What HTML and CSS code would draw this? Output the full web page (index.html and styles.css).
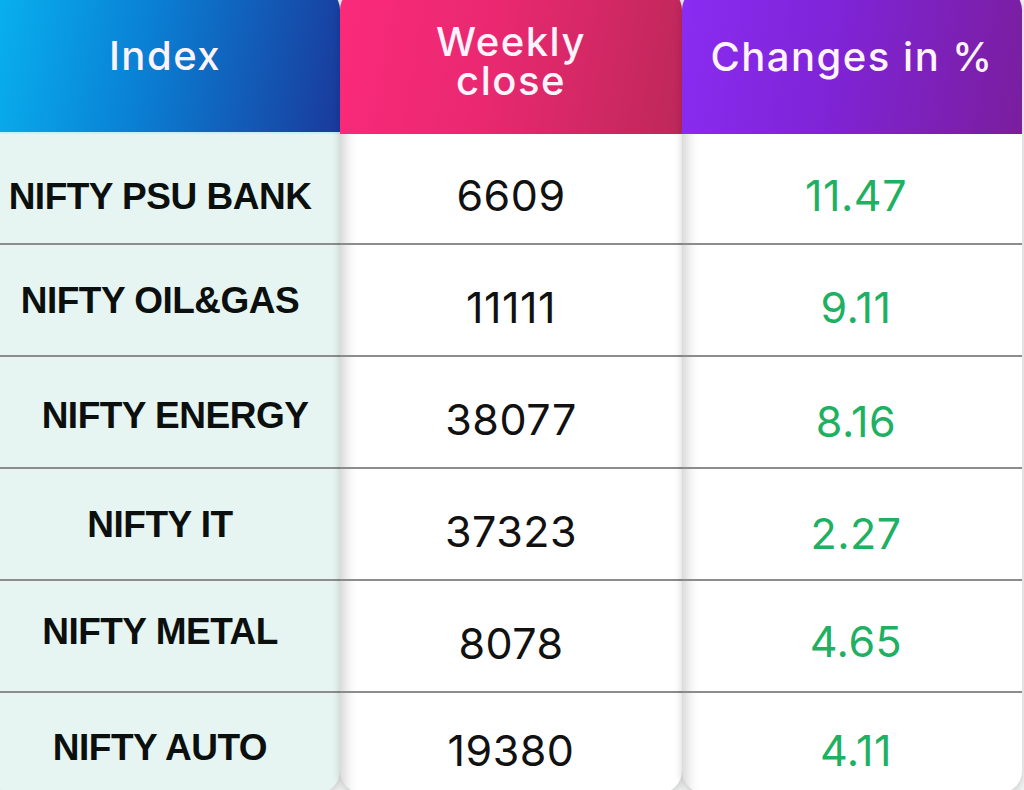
FILE: index.html
```html
<!DOCTYPE html>
<html lang="en">
<head>
<meta charset="utf-8">
<title>Weekly sector indices</title>
<link rel="stylesheet" href="styles.css">
</head>
<body>
<main class="table">
  <section class="col col-index">
    <header class="head">Index</header>
    <div class="cell r1">NIFTY PSU BANK</div>
    <div class="cell r2">NIFTY OIL&amp;GAS</div>
    <div class="cell r3 nudge">NIFTY ENERGY</div>
    <div class="cell r4">NIFTY IT</div>
    <div class="cell r5">NIFTY METAL</div>
    <div class="cell r6 last">NIFTY AUTO</div>
  </section>
  <section class="col col-close">
    <header class="head two-line"><span class="line">Weekly</span><span class="line">close</span></header>
    <div class="cell r1">6609</div>
    <div class="cell r2">11111</div>
    <div class="cell r3">38077</div>
    <div class="cell r4">37323</div>
    <div class="cell r5">8078</div>
    <div class="cell r6 last">19380</div>
  </section>
  <section class="col col-change">
    <header class="head">Changes in %</header>
    <div class="cell r1">11.47</div>
    <div class="cell r2">9.11</div>
    <div class="cell r3">8.16</div>
    <div class="cell r4">2.27</div>
    <div class="cell r5">4.65</div>
    <div class="cell r6 last">4.11</div>
  </section>
</main>
</body>
</html>
```
FILE: styles.css
```css
html, body {
  margin: 0;
  padding: 0;
}
body {
  width: 1024px;
  height: 790px;
  overflow: hidden;
  background: #f3f5f5;
}
.table {
  display: grid;
  grid-template-columns: 350px 342px 340px;
  margin: -12px 0 0 -10px;
}
.col {
  display: flex;
  flex-direction: column;
  border-radius: 22px;
  overflow: hidden;
  background: #ffffff;
  box-shadow: 0 3px 8px rgba(0, 0, 0, 0.18);
}
.head {
  height: 146px;
  box-sizing: border-box;
  padding-bottom: 8px;
  display: flex;
  flex-direction: column;
  align-items: center;
  justify-content: center;
  text-align: center;
  color: #fdf3fb;
  font-family: Inter, "Open Sans", sans-serif;
  font-weight: 500;
  font-size: 40px;
  letter-spacing: 1.5px;
  line-height: 44px;
}
.two-line {
  padding-bottom: 0;
}
.two-line .line {
  display: block;
  line-height: 39px;
}
.col-index .head {
  background: linear-gradient(100deg, #08b3f1 0%, #0a7fd3 45%, #1a3a9c 100%);
  border-bottom: 2px solid #c9f2f6;
}
.col-close .head {
  background: linear-gradient(100deg, #fb2a7a 0%, #e92870 45%, #bd2859 100%);
}
.col-change .head {
  background: linear-gradient(100deg, #8a2cf2 0%, #7f24d6 45%, #7a1e9e 100%);
}
.cell {
  height: 112px;
  box-sizing: border-box;
  border-bottom: 2px solid #8c8c8c;
  display: flex;
  align-items: center;
  justify-content: center;
  line-height: 1;
}
.cell.r1 {
  height: 111px;
}
.cell.last {
  height: 100px;
  border-bottom: 0;
}
.col-index {
  background: #e6f5f1;
}
.col-index .cell {
  font-family: "Liberation Sans", Arimo, sans-serif;
  font-weight: 700;
  font-size: 37px;
  letter-spacing: -0.5px;
  color: #0b0f0e;
  padding-right: 10px;
}
.col-index .cell.nudge {
  padding-right: 0;
  padding-left: 20px;
}
.col-close .cell,
.col-change .cell {
  font-family: Inter, "Open Sans", sans-serif;
  font-weight: 400;
  font-size: 43px;
  letter-spacing: 0.5px;
  box-shadow: inset 16px 0 14px -12px rgba(0, 0, 0, 0.2);
  padding-top: 14px;
}
.col-close .cell {
  color: #111111;
}
.col-change .cell {
  color: #20b062;
  padding-left: 8px;
}
.col-index .cell.r1 { padding-top: 16px; }
.col-index .cell.r3 { padding-top: 6px; }
.col-index .cell.r5 { padding-bottom: 10px; }
.col-index .cell.r6 { padding-top: 8px; }
.col-change .cell.r3,
.col-change .cell.r4 { padding-top: 18px; }
.col-change .cell.r5 { padding-top: 10px; }
```
